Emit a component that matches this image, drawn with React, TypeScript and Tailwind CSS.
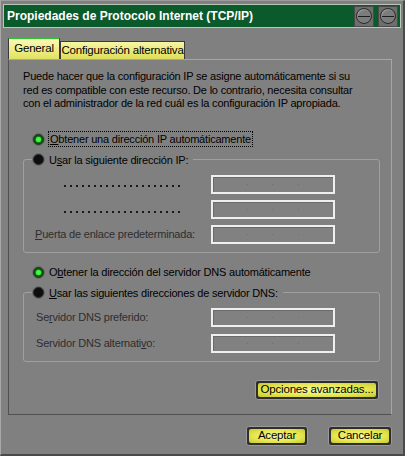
import React from "react"

const font = { fontFamily: '"Liberation Sans", Arial, sans-serif' }

function Radio({ on }: { on?: boolean }) {
  return (
    <span className="flex h-[11px] w-[11px] shrink-0 items-center justify-center rounded-full border border-[#2a2a2a] bg-[#0d0d0d] shadow-[0_0_0_1px_#6a6a6a]">
      {on && <span className="h-[5px] w-[5px] rounded-full bg-[#3cff3c] shadow-[0_0_3px_1px_#1fd81f]" />}
    </span>
  )
}

function IpBox() {
  return (
    <div className="flex h-[19px] w-[124px] shrink-0 items-center justify-around border-2 border-[#efefef] bg-[#818181] px-[22px] shadow-[inset_1px_1px_0_#6a6a6a]">
      <span className="h-[1px] w-[1px] bg-[#6e6e6e]" />
      <span className="h-[1px] w-[1px] bg-[#6e6e6e]" />
      <span className="h-[1px] w-[1px] bg-[#6e6e6e]" />
    </div>
  )
}

function Dots() {
  return (
    <div className="flex gap-[4px]">
      {Array.from({ length: 20 }).map((_, i) => (
        <span key={i} className="h-[2px] w-[2px] bg-[#1a1a1a]" />
      ))}
    </div>
  )
}

function YellowButton({ children, w }: { children: React.ReactNode; w: string }) {
  return (
    <div className={`${w} h-[20px] rounded-[3px] border border-[#9a9a9a] bg-[#2e2e2e] p-[2px]`}>
      <div className="flex h-full items-center justify-center whitespace-nowrap rounded-[2px] bg-[radial-gradient(ellipse_at_center,#f8f8a8_0%,#e6e64e_60%,#c8c830_100%)] text-[11.5px] leading-none text-black">
        {children}
      </div>
    </div>
  )
}

export default function App() {
  return (
    <div style={font} className="h-[456px] w-[405px] overflow-hidden whitespace-nowrap border-t border-l border-r-2 border-b-2 border-t-[#9c9c9c] border-l-[#a8a8a8] border-r-[#4a4a4a] border-b-[#4a4a4a] bg-[#808080] text-[11px] tracking-[-0.2px] text-black">
      {/* title bar */}
      <div className="mx-[2px] mt-[3px] flex h-[24px] items-center justify-between border border-[#b8c8b8] bg-[#0b5a2c] pl-[3px] pr-[2px]">
        <span className="text-[12px] font-bold tracking-normal text-white">
          Propiedades de Protocolo Internet (TCP/IP)
        </span>
        <div className="flex gap-[4px]">
          {[0, 1].map(i => (
            <div key={i} className="flex h-[21px] w-[20px] items-center justify-center border border-[#4a4a4a] bg-[#6e6e6e]">
              <div className="flex h-[16px] w-[16px] items-center justify-center rounded-full border border-[#2a2a2a] bg-[#7c7c7c] shadow-[inset_1px_1px_0_#9a9a9a]">
                <div className="h-[1px] w-[12px] bg-[#1e1e1e]" />
              </div>
            </div>
          ))}
        </div>
      </div>

      <div className="pl-[7px] pr-[11px] pt-[9px]">
        {/* tabs */}
        <div className="flex h-[22px] items-end">
          <div className="flex h-[22px] w-[52px] items-center justify-center rounded-t-[2px] border border-b-0 border-[#3a3a3a] border-t-2 border-t-[#2fc02f] bg-[linear-gradient(#fafab8,#e2e260)] text-[11.5px]">
            General
          </div>
          <div className="flex h-[18px] w-[125px] items-center justify-center border border-b-0 border-[#3a3a3a] bg-[linear-gradient(#f6f6a4,#dede58)] text-[11.5px]">
            Configuración alternativa
          </div>
        </div>

        {/* panel */}
        <div className="h-[356px] border border-t-[#a6a6a6] border-l-[#505050] border-r-[#a6a6a6] border-b-[#505050] pl-[14px] pr-[11px] pt-[10px]">
          <p className="w-[340px] whitespace-normal leading-[13.5px]">
            Puede hacer que la configuración IP se asigne automáticamente si su red es compatible con este recurso. De lo contrario, necesita consultar con el administrador de la red cuál es la configuración IP apropiada.
          </p>

          <div className="mt-[20px] flex h-[17px] items-center pl-[10px]">
            <Radio on />
            <span className="ml-[4px] border border-dotted border-black px-[1px] leading-[14px]">
              <u>O</u>btener una dirección IP automáticamente
            </span>
          </div>

          <fieldset className="mt-[5px] rounded-[3px] border border-[#a0a0a0] pb-[8px] pl-[9px] pr-[44px]">
            <legend className="flex h-[14px] items-center pr-[5px]">
              <Radio />
              <span className="ml-[5px] leading-[14px]">
                U<u>s</u>ar la siguiente dirección IP:
              </span>
            </legend>
            <div className="mt-[8px] flex flex-col gap-[6px]">
              <div className="flex h-[19px] items-center justify-between">
                <div className="pl-[31px] pt-[3px]"><Dots /></div>
                <IpBox />
              </div>
              <div className="flex h-[19px] items-center justify-between">
                <div className="pl-[31px] pt-[5px]"><Dots /></div>
                <IpBox />
              </div>
              <div className="flex h-[19px] items-center justify-between">
                <span className="pl-[2px] text-[#2e2e2e]"><u>P</u>uerta de enlace predeterminada:</span>
                <IpBox />
              </div>
            </div>
          </fieldset>

          <div className="mt-[11px] flex h-[17px] items-center pl-[10px]">
            <Radio on />
            <span className="ml-[5px] leading-[14px]">
              O<u>b</u>tener la dirección del servidor DNS automáticamente
            </span>
          </div>

          <fieldset className="mt-[5px] rounded-[3px] border border-[#a0a0a0] pb-[8px] pl-[9px] pr-[44px]">
            <legend className="flex h-[14px] items-center pr-[5px]">
              <Radio />
              <span className="ml-[5px] leading-[14px]">
                <u>U</u>sar las siguientes direcciones de servidor DNS:
              </span>
            </legend>
            <div className="mt-[8px] flex flex-col gap-[7px]">
              <div className="flex h-[19px] items-center justify-between">
                <span className="pl-[3px] text-[#2e2e2e]">Se<u>r</u>vidor DNS preferido:</span>
                <IpBox />
              </div>
              <div className="flex h-[19px] items-center justify-between">
                <span className="pl-[3px] text-[#2e2e2e]">Servidor DNS alternati<u>v</u>o:</span>
                <IpBox />
              </div>
            </div>
          </fieldset>

          <div className="mt-[18px] flex justify-end pr-[1px]">
            <YellowButton w="w-[124px]">Opciones avanzadas...</YellowButton>
          </div>
        </div>

        {/* footer */}
        <div className="mt-[11px] flex justify-end gap-[20px]">
          <YellowButton w="w-[62px]">Aceptar</YellowButton>
          <YellowButton w="w-[64px]">Cancelar</YellowButton>
        </div>
      </div>
    </div>
  )
}
